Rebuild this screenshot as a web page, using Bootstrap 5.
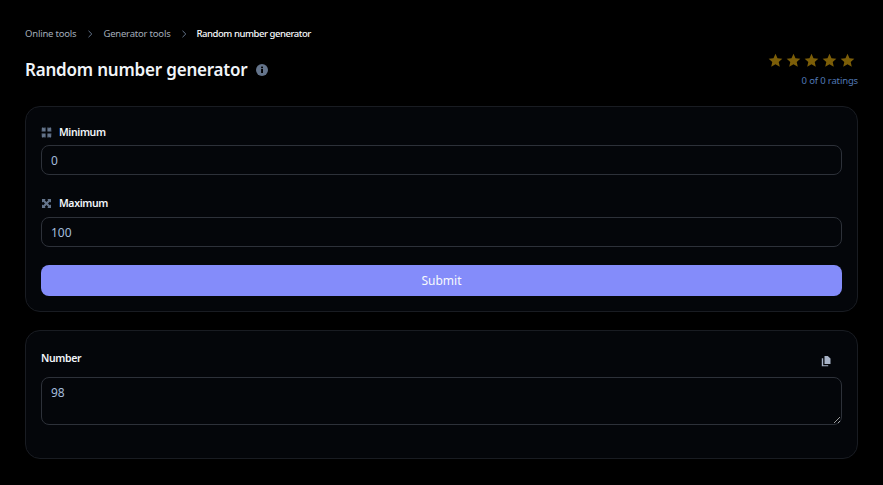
<!DOCTYPE html>
<html lang="en">
<head>
    <meta charset="UTF-8">
    <meta name="viewport" content="width=device-width, initial-scale=1.0">
    <title>Random number generator</title>
    <link rel="stylesheet" href="https://cdn.jsdelivr.net/npm/bootstrap@5.3.0/dist/css/bootstrap.min.css">
    <style>
        html, body { height: 100%; overflow: hidden; }
        body { background: #000; font-family: "Noto Sans", sans-serif; color: #f1f5f9; }
        .page-wrap { padding: 26px 25px 0; }
        .crumbs { font-size: 9.5px; line-height: 15px; gap: 9.5px; color: #a3adba; letter-spacing: -.2px; }
        .crumbs svg { width: 8px; height: 8px; }
        .crumb-now { color: #f8fafc; font-weight: 500; letter-spacing: -.45px; margin-left: -1px; }
        .head-row { margin-top: 12px; height: 53px; }
        .page-title { font-size: 17px; line-height: 28px; font-weight: 600; margin: 0; color: #f1f5f9; letter-spacing: -.2px; }
        .title-wrap { gap: 8px; margin-top: 3px; }
        .info-ico { width: 12px; height: 12px; }
        .stars { gap: 3px; margin-right: 3px; }
        .stars svg { width: 15px; height: 15px; fill: #7c5e08; }
        .rating-text { font-size: 9.5px; line-height: 14px; color: #5078b5; margin-top: 6px; letter-spacing: -.15px; }
        .tool-box { background: #04060a; border: 1px solid #191c22; border-radius: 15px; padding: 15px; }
        .box-one { height: 206px; padding-top: 17px; }
        .box-two { margin-top: 18px; height: 129px; }
        .field-label { font-size: 10.5px; line-height: 16px; font-weight: 600; color: #f1f5f9; gap: 7px; margin-bottom: 5px; letter-spacing: -.38px; }
        .field-label svg { width: 11px; height: 11px; fill: #64748b; }
        .field-input.form-control { background: #04060a; border: 1px solid #2d3139; border-radius: 8px; color: #a3bcdc; font-size: 12px; height: 30px; padding: 0 9px; box-shadow: none; }
        textarea.field-input.form-control { height: 48px; padding: 6px 9px; line-height: 18px; }
        .field-gap { margin-top: 20px; }
        .field-gap .field-label { margin-bottom: 6px; }
        .submit-btn.btn { background: #848cfa; border: 0; border-radius: 8px; color: #f8fafc; font-size: 12px; height: 31px; width: 100%; margin-top: 18px; padding: 0; }
        .copy-ico { width: 12px; height: 12px; fill: #a8b3c7; margin: 0 10px 2px 0; }
        .number-head { height: 31px; }
        .number-head .field-label { margin-bottom: 7px; }
    </style>
</head>
<body>
    <div class="page-wrap">
        <!-- Breadcrumb -->
        <div class="crumbs d-flex align-items-center">
            <span>Online tools</span>
            <svg viewBox="0 0 8 8" fill="none" stroke="#64748b" stroke-width="1"><path d="M2.5 0.8 5.8 4 2.5 7.2"/></svg>
            <span>Generator tools</span>
            <svg viewBox="0 0 8 8" fill="none" stroke="#64748b" stroke-width="1"><path d="M2.5 0.8 5.8 4 2.5 7.2"/></svg>
            <span class="crumb-now">Random number generator</span>
        </div>

        <!-- Title and rating -->
        <div class="head-row d-flex justify-content-between align-items-start">
            <div class="title-wrap d-flex align-items-center">
                <h1 class="page-title">Random number generator</h1>
                <svg class="info-ico" viewBox="0 0 12 12"><circle cx="6" cy="6" r="6" fill="#64748b"/><rect x="5.1" y="5" width="1.9" height="4" fill="#000"/><rect x="5.1" y="2.6" width="1.9" height="1.6" fill="#000"/></svg>
            </div>
            <div class="d-flex flex-column align-items-end">
                <div class="stars d-flex">
                    <svg viewBox="0 0 20 20"><path d="M10 1l2.7 5.9 6.4.7-4.8 4.3 1.400 6.300L10 15l-5.700 3.200 1.400-6.300L.9 7.600l6.400-.7z"/></svg>
                    <svg viewBox="0 0 20 20"><path d="M10 1l2.7 5.9 6.4.7-4.8 4.3 1.400 6.300L10 15l-5.700 3.200 1.400-6.300L.9 7.600l6.400-.7z"/></svg>
                    <svg viewBox="0 0 20 20"><path d="M10 1l2.7 5.9 6.4.7-4.8 4.3 1.400 6.300L10 15l-5.700 3.200 1.400-6.300L.9 7.600l6.400-.7z"/></svg>
                    <svg viewBox="0 0 20 20"><path d="M10 1l2.7 5.9 6.4.7-4.8 4.3 1.400 6.300L10 15l-5.700 3.200 1.400-6.300L.9 7.600l6.400-.7z"/></svg>
                    <svg viewBox="0 0 20 20"><path d="M10 1l2.7 5.9 6.4.7-4.8 4.3 1.400 6.300L10 15l-5.700 3.200 1.400-6.300L.9 7.600l6.400-.7z"/></svg>
                </div>
                <div class="rating-text">0 of 0 ratings</div>
            </div>
        </div>

        <!-- Form -->
        <div class="tool-box box-one">
            <label class="field-label d-flex align-items-center">
                <svg viewBox="0 0 11 11"><path d="M1 .6 2.400 .6 3.300 1.500V.6h1.300v4H.6V3.300h.9L.6 2.400zM10 .6 8.600.6 7.700 1.500V.6H6.400v4h4V3.300h-.9l.9-.9zM1 10.400h1.400l.9-.9v.9h1.300v-4H.6v1.300h.9l-.9.9zM10 10.400H8.600l-.9-.9v.9H6.400v-4h4v1.300h-.9l.9.9z"/></svg>
                Minimum
            </label>
            <input class="field-input form-control" type="text" value="0">
            <div class="field-gap">
                <label class="field-label d-flex align-items-center">
                    <svg viewBox="0 0 11 11"><path d="M1 1h3.600L3.800 2.300 5.500 4 7.200 2.300 6.400 1H10v3.600L8.700 3.800 7 5.500l1.700 1.700 1.300-.8V10H6.400l.8-1.300L5.500 7 3.800 8.700l.8 1.300H1V6.400l1.300.8L4 5.500 2.300 3.800 1 4.600z"/></svg>
                    Maximum
                </label>
                <input class="field-input form-control" type="text" value="100">
            </div>
            <button class="submit-btn btn" type="button">Submit</button>
        </div>

        <!-- Result -->
        <div class="tool-box box-two">
            <div class="number-head d-flex justify-content-between align-items-center">
                <label class="field-label d-flex align-items-center">Number</label>
                <svg class="copy-ico" viewBox="0 0 12 12"><path d="M4.500 1h3.300L10.500 3.500V9H4.500z"/><path d="M1.800 3.200h1.400v7h5v1H1.800z"/></svg>
            </div>
            <textarea class="field-input form-control" rows="2">98</textarea>
        </div>
    </div>
    <script src="https://cdn.jsdelivr.net/npm/bootstrap@5.3.0/dist/js/bootstrap.bundle.min.js"></script>
</body>
</html>
